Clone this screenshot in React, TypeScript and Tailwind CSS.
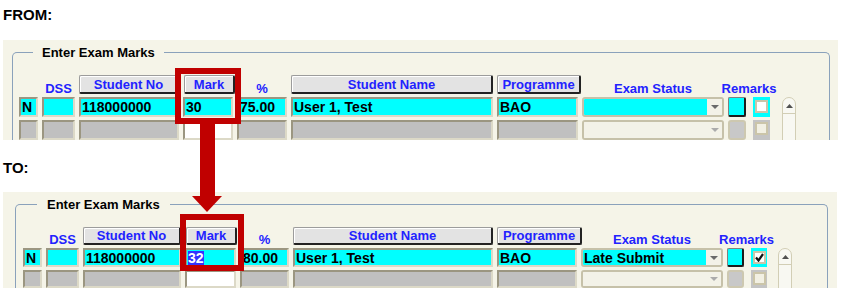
import React from 'react';

type Variant = 'from' | 'to';

const cfg = {
  from: {
    panel: 'mt-[16px] ml-[3px] w-[835px] h-[100px]',
    box: 'ml-[9px] w-[818px] pl-[6px]',
    title: 'left-[20px] px-[9px]',
    grid: 'grid-cols-[19px_33px_100px_50px_50px_202px_81px_142px_21px_25px_14px] grid-rows-[19px_20px_20px]',
    prog: 'w-[84px]',
    check: 'w-[17px]',
    remarks: 'w-[18px]',
  },
  to: {
    panel: 'mt-[15px] ml-[3px] w-[834px] h-[96px]',
    box: 'ml-[12px] w-[813px] pl-[7px]',
    title: 'left-[21px] px-[10px]',
    grid: 'grid-cols-[19px_33px_98px_51px_49px_200px_80px_142px_20px_23px_14px] grid-rows-[18px_19px_18px]',
    prog: 'w-[85px]',
    check: 'w-[16px]',
    remarks: 'w-[17px]',
  },
};

const Cell: React.FC<{ bg: string; children?: React.ReactNode }> = ({ bg, children }) => (
  <div
    className={`flex items-center h-full pl-[1px] border-2 border-t-[#9b9681] border-l-[#9b9681] border-b-[#dcd9c7] border-r-[#dcd9c7] text-[14px] font-bold leading-none text-black whitespace-nowrap overflow-hidden ${bg}`}
  >
    {children}
  </div>
);

const HeadBtn: React.FC<{ className?: string; children: React.ReactNode }> = ({ className = 'w-full', children }) => (
  <div
    className={`flex items-center justify-center h-full rounded-[2px] border border-t-[#9c9c9c] border-l-[#9c9c9c] border-b-2 border-r-2 border-b-[#222222] border-r-[#222222] bg-[#e3e3e3] shadow-[inset_1px_1px_0_#ffffff] text-[13px] font-bold leading-none text-[#2222ff] whitespace-nowrap ${className}`}
  >
    {children}
  </div>
);

const Label: React.FC<{ className?: string; children: React.ReactNode }> = ({ className = '', children }) => (
  <div
    className={`self-end flex justify-center text-[13px] font-bold leading-[11px] text-[#2222ff] whitespace-nowrap ${className}`}
  >
    {children}
  </div>
);

const Caret: React.FC<{ color: string }> = ({ color }) => (
  <svg width="8" height="4" viewBox="0 0 8 4">
    <path d="M0 0 L8 0 L4 4 Z" fill={color} />
  </svg>
);

const Combo: React.FC<{ active?: boolean; children?: React.ReactNode }> = ({ active, children }) => (
  <div className="flex h-full rounded-[3px] border-2 border-[#c6c1a9] overflow-hidden">
    <div
      className={`flex-1 flex items-center pl-[1px] text-[14px] font-bold leading-none text-black whitespace-nowrap ${
        active ? 'bg-[#00ffff]' : 'bg-[#f3f2e8]'
      }`}
    >
      {children}
    </div>
    <div className="w-[15px] flex items-center justify-center bg-[#f3f2e8]">
      <Caret color={active ? '#6a6a6a' : '#ababab'} />
    </div>
  </div>
);

const CheckBox: React.FC<{ checked?: boolean; light?: boolean }> = ({ checked, light }) => (
  <div
    className={`w-[13px] h-[13px] border-2 border-[#cbc5a9] flex items-center justify-center ${
      light ? 'bg-[#f2f0e3]' : 'bg-white'
    }`}
  >
    {checked && (
      <svg width="9" height="9" viewBox="0 0 9 9">
        <path d="M1 4.5 L3.5 7.5 L8 1" fill="none" stroke="#111111" strokeWidth="2.2" />
      </svg>
    )}
  </div>
);

const Panel: React.FC<{ v: Variant; mark: React.ReactNode; pct: string; status?: string; checked?: boolean }> = ({
  v,
  mark,
  pct,
  status,
  checked,
}) => {
  const c = cfg[v];
  return (
    <div className={`bg-[#f5f4e8] overflow-hidden ${c.panel}`}>
      <div
        className={`relative mt-[12px] h-[200px] border border-b-0 border-[#8aa1bb] rounded-t-[5px] pt-[22px] ${c.box}`}
      >
        <span
          className={`absolute top-[-8px] bg-[#f5f4e8] text-[13px] font-bold leading-[15px] text-black ${c.title}`}
        >
          Enter Exam Marks
        </span>

        <div className={`grid gap-x-[4px] gap-y-[3px] ${c.grid}`}>
          {/* header */}
          <div />
          <Label>DSS</Label>
          <HeadBtn>Student No</HeadBtn>
          <HeadBtn className="ml-[1px] w-[51px]">Mark</HeadBtn>
          <Label>%</Label>
          <HeadBtn>Student Name</HeadBtn>
          <HeadBtn className={c.prog}>Programme</HeadBtn>
          <Label>Exam Status</Label>
          <Label className="col-span-2 pr-[8px]">Remarks</Label>
          <div />

          {/* row 1 */}
          <Cell bg="bg-[#00ffff]">N</Cell>
          <Cell bg="bg-[#00ffff]" />
          <Cell bg="bg-[#00ffff]">118000000</Cell>
          <Cell bg="bg-[#00ffff]">{mark}</Cell>
          <Cell bg="bg-[#00ffff]">{pct}</Cell>
          <Cell bg="bg-[#00ffff]">User 1, Test</Cell>
          <Cell bg="bg-[#00ffff]">BAO</Cell>
          <Combo active>{status}</Combo>
          <div
            className={`h-full rounded-[2px] border border-t-[#808080] border-l-[#808080] border-b-2 border-r-2 border-b-[#1c1c1c] border-r-[#1c1c1c] bg-[#00ffff] ${c.remarks}`}
          />
          <div className={`h-full flex justify-center pt-[3px] bg-[#00ffff] ${c.check}`}>
            <CheckBox checked={checked} />
          </div>
          <div className="row-span-2 w-[14px] h-[60px] rounded-t-[7px] border border-[#d2ceb5] bg-[#f8f8f2] flex flex-col">
            <div className="h-[16px] border-b border-[#d2ceb5] flex items-center justify-center">
              <svg width="7" height="4" viewBox="0 0 7 4">
                <path d="M3.5 0 L7 4 L0 4 Z" fill="#505050" />
              </svg>
            </div>
          </div>

          {/* row 2 */}
          <Cell bg="bg-[#c0c0c0]" />
          <Cell bg="bg-[#c0c0c0]" />
          <Cell bg="bg-[#c0c0c0]" />
          <Cell bg="bg-white" />
          <Cell bg="bg-[#c0c0c0]" />
          <Cell bg="bg-[#c0c0c0]" />
          <Cell bg="bg-[#c0c0c0]" />
          <Combo />
          <div className={`h-full rounded-[3px] border-2 border-[#cdc8b0] bg-[#c8c8c8] ${c.remarks}`} />
          <div className={`h-full flex justify-center pt-[2px] bg-[#c4c4c4] ${c.check}`}>
            <CheckBox light />
          </div>
        </div>
      </div>
    </div>
  );
};

export default function App() {
  return (
    <div className="relative w-[845px] h-[303px] overflow-hidden bg-white font-['Liberation_Sans',Arial,sans-serif]">
      <div className="pt-[6px] pl-[3px] text-[15px] font-bold leading-[18px] text-black">FROM:</div>
      <Panel v="from" mark="30" pct="75.00" />

      <div className="mt-[19px] pl-[3px] text-[15px] font-bold leading-[18px] text-black">TO:</div>
      <Panel
        v="to"
        mark={<span className="bg-[#3333ff] text-white leading-[14px]">32</span>}
        pct="80.00"
        status="Late Submit"
        checked
      />

      {/* highlight boxes and arrow */}
      <div className="absolute left-[175px] top-[68px] w-[66px] h-[56px] border-[6px] border-[#c00000]" />
      <div className="absolute left-[180px] top-[214px] w-[64px] h-[57px] border-[6px] border-[#c00000]" />
      <svg className="absolute left-0 top-0" width="845" height="303">
        <rect x="200" y="124" width="15" height="73" fill="#c00000" />
        <polygon points="192,196 222,196 207,212" fill="#c00000" />
      </svg>
    </div>
  );
}
